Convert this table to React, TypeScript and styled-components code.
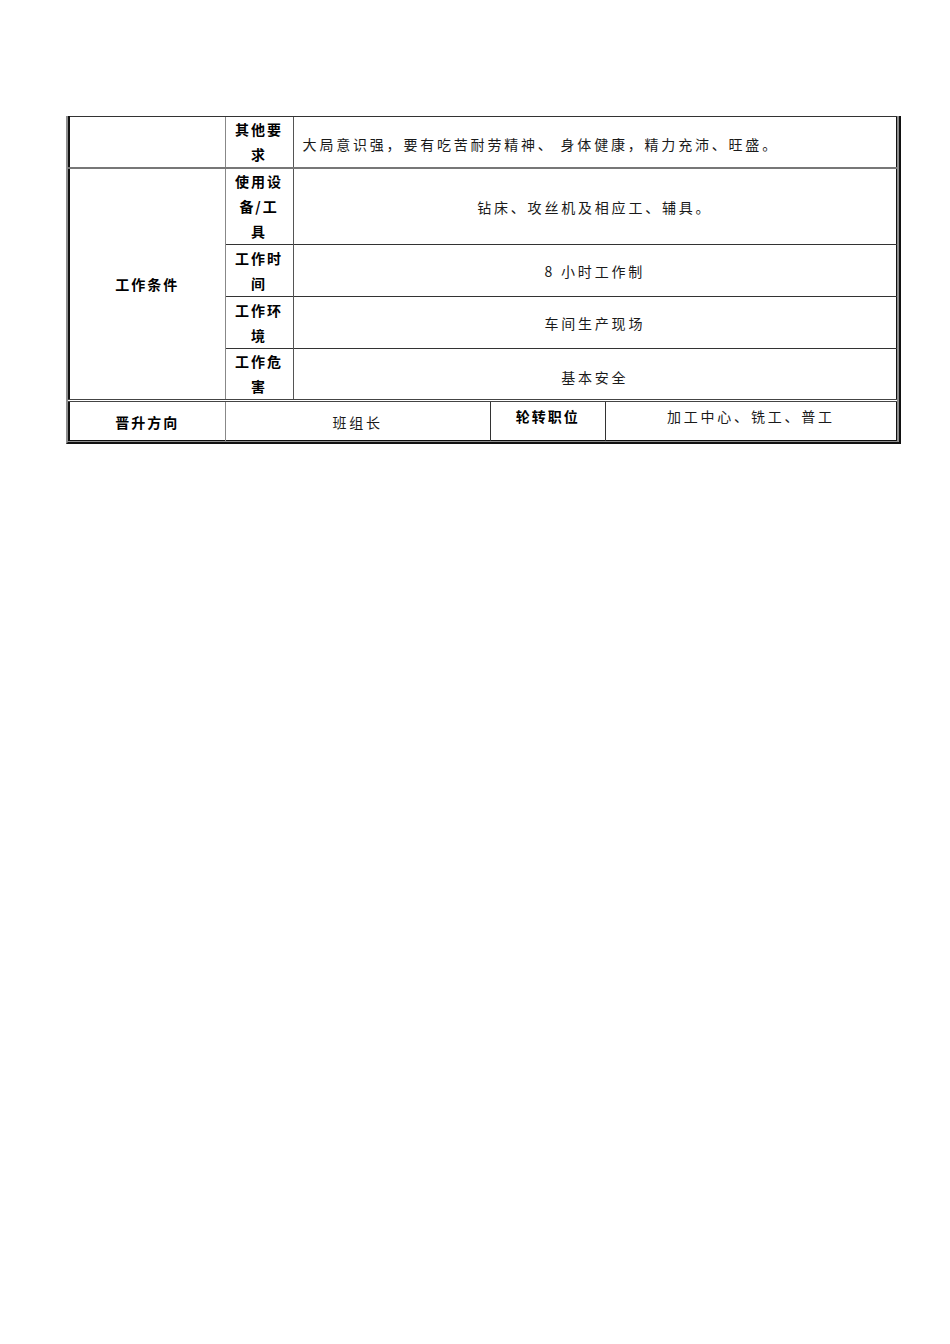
import React from 'react';
import styled, { createGlobalStyle } from 'styled-components';

const GlobalStyle = createGlobalStyle`
  html, body {
    margin: 0;
    padding: 0;
    background: #fff;
  }
  body {
    width: 950px;
    min-height: 1344px;
    font-family: "Noto Sans CJK SC", "Liberation Sans", sans-serif;
    color: #000;
  }
`;

const Page = styled.div`
  padding: 116px 0 0 66px;
`;

const Frame = styled.div`
  width: 829px;
  background: #8e8e8e;
  border-left: 2px solid #8e8e8e;
  border-right: 2px solid #111;
  border-bottom: 2px solid #111;
  padding: 0 2px 1px 0;
  box-sizing: content-box;
`;

const Table = styled.table`
  width: 829px;
  table-layout: fixed;
  border-collapse: collapse;
  background: #fff;
  border-left: 2px solid #111;
  border-top: 1px solid #111;
  border-right: 1px solid #111;
  border-bottom: 1px solid #111;
`;

const Col = styled.col<{ $w: number }>`
  width: ${p => p.$w}px;
`;

const Row = styled.tr<{ $h: number; $top?: 'thick' | 'double' | 'thin' }>`
  height: ${p => p.$h}px;
  & > td {
    border-top: ${p =>
      p.$top === 'thick' ? '2px solid #777' : p.$top === 'double' ? '3px double #444' : '1px solid #333'};
  }
`;

const Label = styled.td<{ $line?: string; $valign?: string; $pt?: number }>`
  border-left: ${p => (p.$line ? `1px solid ${p.$line}` : 'none')};
  padding: ${p => p.$pt || 0}px 6px 0;
  text-align: center;
  vertical-align: ${p => p.$valign || 'middle'};
  font-weight: 700;
  font-size: 14px;
  letter-spacing: 2px;
  line-height: 25px;
`;

const Line = styled.span`
  display: block;
`;

const Value = styled.td<{ $align?: string; $valign?: string; $line?: string; $pt?: number }>`
  border-left: 1px solid ${p => p.$line || '#555'};
  padding: ${p => p.$pt || 0}px 9px 0;
  text-align: ${p => p.$align || 'center'};
  vertical-align: ${p => p.$valign || 'middle'};
  font-size: 14px;
  font-weight: 400;
  letter-spacing: 2.8px;
  color: #1a1a1a;
  line-height: 20px;
`;

const Blank = styled.td`
  padding: 0;
`;

const conditions = [
  { label: ['使用设', '备/工', '具'], value: '钻床、攻丝机及相应工、辅具。', h: 76, pt: 0 },
  { label: ['工作时', '间'], value: '8 小时工作制', h: 52, pt: 0 },
  { label: ['工作环', '境'], value: '车间生产现场', h: 52, pt: 0 },
  { label: ['工作危', '害'], value: '基本安全', h: 52, pt: 6 },
];

const widths = [156, 68, 197, 115, 291];

export default function App() {
  return (
    <Page>
      <GlobalStyle />
      <Frame>
        <Table>
          <colgroup>
            {widths.map((w, i) => (
              <Col key={i} $w={w} />
            ))}
          </colgroup>
          <tbody>
            <Row $h={50}>
              <Blank />
              <Label $line="#888">
                <Line>其他要</Line>
                <Line>求</Line>
              </Label>
              <Value colSpan={3} $align="left" $pt={4}>
                大局意识强，要有吃苦耐劳精神、 身体健康，精力充沛、旺盛。
              </Value>
            </Row>
            {conditions.map((c, i) => (
              <Row key={i} $h={c.h} $top={i === 0 ? 'thick' : 'thin'}>
                {i === 0 && <Label rowSpan={4}>工作条件</Label>}
                <Label $line="#888">
                  {c.label.map(l => (
                    <Line key={l}>{l}</Line>
                  ))}
                </Label>
                <Value colSpan={3} $pt={c.pt}>
                  {c.value}
                </Value>
              </Row>
            ))}
            <Row $h={40} $top="double">
              <Label $pt={2}>晋升方向</Label>
              <Value colSpan={2} $line="#888" $pt={2}>
                班组长
              </Value>
              <Label $valign="top" $line="#333" $pt={2}>
                轮转职位
              </Label>
              <Value $valign="top" $line="#333" $pt={4}>
                加工中心、铣工、普工
              </Value>
            </Row>
          </tbody>
        </Table>
      </Frame>
    </Page>
  );
}
